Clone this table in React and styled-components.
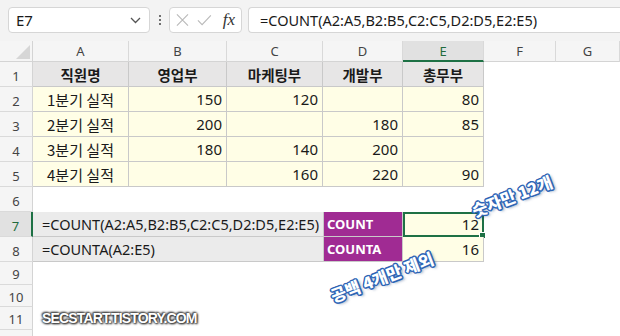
import React from 'react';
import styled, { createGlobalStyle } from 'styled-components';

const GlobalStyle = createGlobalStyle`
  html, body {
    margin: 0;
    padding: 0;
    background: #ffffff;
    overflow: hidden;
  }
  body {
    font-family: "Noto Sans", "Noto Sans CJK KR", sans-serif;
    color: #1a1a1a;
  }
`;

const COLS = ['A', 'B', 'C', 'D', 'E', 'F', 'G'];
const COL_WIDTHS = '33px 96px 98px 96px 80px 81px 72px 64px';

const data = [
  ['1분기 실적', '150', '120', '', '80'],
  ['2분기 실적', '200', '', '180', '85'],
  ['3분기 실적', '180', '140', '200', ''],
  ['4분기 실적', '', '160', '220', '90'],
];

const App = () => {
  return (
    <>
      <GlobalStyle />
      <Page>
        <Toolbar>
          <NameBox>
            <span>E7</span>
            <svg width="11" height="7" viewBox="0 0 11 7">
              <path d="M1 1l4.5 4.5L10 1" fill="none" stroke="#555" strokeWidth="1.3" />
            </svg>
          </NameBox>
          <Dots>
            <i /><i /><i />
          </Dots>
          <FxBox>
            <svg width="14" height="14" viewBox="0 0 14 14">
              <path d="M1 1l12 12M13 1L1 13" stroke="#b9b9b9" strokeWidth="1.2" />
            </svg>
            <svg width="16" height="14" viewBox="0 0 16 14">
              <path d="M1 7.5l4.5 4.5L15 2" fill="none" stroke="#b9b9b9" strokeWidth="1.2" />
            </svg>
            <FxLabel>fx</FxLabel>
          </FxBox>
          <FormulaBox>=COUNT(A2:A5,B2:B5,C2:C5,D2:D5,E2:E5)</FormulaBox>
        </Toolbar>

        <Sheet>
          <Corner>
            <svg width="14" height="14" viewBox="0 0 14 14">
              <path d="M14 0V14H0z" fill="#d6d6d6" />
            </svg>
          </Corner>
          {COLS.map((c) => (
            <ColHead key={c} $active={c === 'E'}>{c}</ColHead>
          ))}

          <RowHead>1</RowHead>
          {['직원명', '영업부', '마케팅부', '개발부', '총무부'].map((h) => (
            <TitleCell key={h}>{h}</TitleCell>
          ))}
          <Blank /><Blank />

          {data.map((row, i) => (
            <React.Fragment key={i}>
              <RowHead>{i + 2}</RowHead>
              <DataCell $center>{row[0]}</DataCell>
              {row.slice(1).map((v, j) => (
                <DataCell key={j}>{v}</DataCell>
              ))}
              <Blank /><Blank />
            </React.Fragment>
          ))}

          <RowHead>6</RowHead>
          {COLS.map((c) => <Blank key={c} />)}

          <RowHead $active>7</RowHead>
          <FormulaCell>=COUNT(A2:A5,B2:B5,C2:C5,D2:D5,E2:E5)</FormulaCell>
          <LabelCell>COUNT</LabelCell>
          <DataCell $selected>12</DataCell>
          <Blank /><Blank />

          <RowHead>8</RowHead>
          <FormulaCell>=COUNTA(A2:E5)</FormulaCell>
          <LabelCell>COUNTA</LabelCell>
          <DataCell>16</DataCell>
          <Blank /><Blank />

          {['9', '10', '11', ''].map((n, i) => (
            <React.Fragment key={i}>
              <RowHead $short>{n}</RowHead>
              {COLS.map((c) => <Blank key={c} />)}
            </React.Fragment>
          ))}
        </Sheet>

        <Note $x={512} $y={196}>숫자만 12개</Note>
        <Note $x={382} $y={277}>공백 4개만 제외</Note>
        <Watermark>SECSTART.TISTORY.COM</Watermark>
      </Page>
    </>
  );
};
export default App;

const Page = styled.div`
  position: relative;
  width: 620px;
  height: 336px;
  overflow: hidden;
  background: #ffffff;
`;

const Toolbar = styled.div`
  display: flex;
  align-items: center;
  height: 41px;
  padding: 0 0 1px 8px;
  box-sizing: border-box;
  background: #f3f3f3;
`;

const Box = styled.div`
  display: flex;
  align-items: center;
  height: 26px;
  box-sizing: border-box;
  background: #ffffff;
  border: 1px solid #d6d6d6;
  border-radius: 4px;
`;

const NameBox = styled(Box)`
  width: 142px;
  padding: 0 8px 0 7px;
  justify-content: space-between;
  font-size: 15px;
`;

const Dots = styled.div`
  display: flex;
  flex-direction: column;
  gap: 2px;
  margin: 0 8px 0 9px;
  i {
    width: 2px;
    height: 2px;
    background: #444;
    border-radius: 1px;
  }
`;

const FxBox = styled(Box)`
  width: 73px;
  padding: 0 6px;
  gap: 8px;
`;

const FxLabel = styled.span`
  font-family: "Liberation Serif", serif;
  font-style: italic;
  font-size: 17px;
  color: #333;
  margin-left: 3px;
`;

const FormulaBox = styled(Box)`
  flex: 1;
  margin-left: 6px;
  padding-left: 11px;
  border-right: none;
  border-radius: 4px 0 0 4px;
  font-size: 14.5px;
`;

const Sheet = styled.div`
  display: grid;
  grid-template-columns: ${COL_WIDTHS};
  font-size: 15px;
`;

const Corner = styled.div`
  height: 21px;
  background: #f5f5f5;
  border-right: 1px solid #d4d4d4;
  border-bottom: 1px solid #d4d4d4;
  box-sizing: border-box;
  display: flex;
  align-items: flex-end;
  justify-content: flex-end;
  padding: 0 2px 2px 0;
`;

const ColHead = styled.div`
  height: 21px;
  box-sizing: border-box;
  display: flex;
  align-items: center;
  justify-content: center;
  font-size: 13px;
  color: ${(p) => (p.$active ? '#1f6b3d' : '#444')};
  background: ${(p) => (p.$active ? '#e1e1e1' : '#f5f5f5')};
  border-right: 1px solid #d9d9d9;
  border-bottom: ${(p) => (p.$active ? '2px solid #1e7145' : '1px solid #d4d4d4')};
`;

const RowHead = styled.div`
  height: ${(p) => (p.$short ? '22.5px' : '25px')};
  box-sizing: border-box;
  display: flex;
  align-items: center;
  justify-content: center;
  padding-top: 3px;
  font-size: 13px;
  color: ${(p) => (p.$active ? '#1f6b3d' : '#444')};
  background: ${(p) => (p.$active ? '#e1e1e1' : '#f5f5f5')};
  border-bottom: 1px solid #dadada;
  border-right: ${(p) => (p.$active ? '2px solid #1e7145' : '1px solid #d4d4d4')};
`;

const Blank = styled.div`
  background: #ffffff;
`;

const Cell = styled.div`
  box-sizing: border-box;
  display: flex;
  align-items: center;
  padding: 0 4px;
  border-right: 1px solid #c9c9c9;
  border-bottom: 1px solid #c9c9c9;
  white-space: nowrap;
`;

const TitleCell = styled(Cell)`
  justify-content: center;
  background: #e7e6e6;
  font-family: "Noto Sans CJK KR", sans-serif;
  font-weight: 700;
  font-size: 14.5px;
`;

const DataCell = styled(Cell)`
  position: relative;
  justify-content: ${(p) => (p.$center ? 'center' : 'flex-end')};
  background: #fffee6;
  font-family: ${(p) => (p.$center ? '"Noto Sans CJK KR", sans-serif' : '"Noto Sans", sans-serif')};
  font-size: 15px;
  ${(p) => p.$selected && `
    outline: 2px solid #1e7145;
    outline-offset: -2px;
    &::after {
      content: '';
      position: absolute;
      right: -3px;
      bottom: -3px;
      width: 5px;
      height: 5px;
      background: #1e7145;
      border: 1px solid #ffffff;
    }
  `}
`;

const FormulaCell = styled(Cell)`
  grid-column: span 3;
  background: #ebebeb;
  border-right: none;
  padding-left: 9px;
  font-size: 14.5px;
`;

const LabelCell = styled(Cell)`
  background: #a02b93;
  color: #ffffff;
  font-family: "Noto Sans", sans-serif;
  font-weight: 700;
  font-size: 13px;
  padding-left: 3px;
  border-left: 1px solid #c9c9c9;
`;

const BLUE = '#2c64b6';

const Note = styled.div`
  position: absolute;
  left: ${(p) => p.$x}px;
  top: ${(p) => p.$y}px;
  width: max-content;
  transform: translate(-50%, -50%) rotate(-21deg);
  font-family: "Noto Sans CJK KR", sans-serif;
  font-weight: 900;
  font-size: 16.5px;
  line-height: 1;
  color: #ffffff;
  white-space: nowrap;
  text-shadow:
    -1px -1px 0 ${BLUE}, 1px -1px 0 ${BLUE}, -1px 1px 0 ${BLUE}, 1px 1px 0 ${BLUE},
    0 -1.5px 0 ${BLUE}, 0 1.5px 0 ${BLUE}, -1.5px 0 0 ${BLUE}, 1.5px 0 0 ${BLUE},
    2px 2px 3px rgba(30, 60, 120, 0.6);
`;

const Watermark = styled.div`
  position: absolute;
  left: 42px;
  top: 310px;
  font-family: "Liberation Sans", sans-serif;
  font-weight: 700;
  font-size: 14px;
  letter-spacing: -0.85px;
  color: #ffffff;
  text-shadow:
    0 0 2px #3a3a3a, 0 0 3px #3a3a3a, 1px 1px 2px #222, -1px -1px 2px #444;
`;
